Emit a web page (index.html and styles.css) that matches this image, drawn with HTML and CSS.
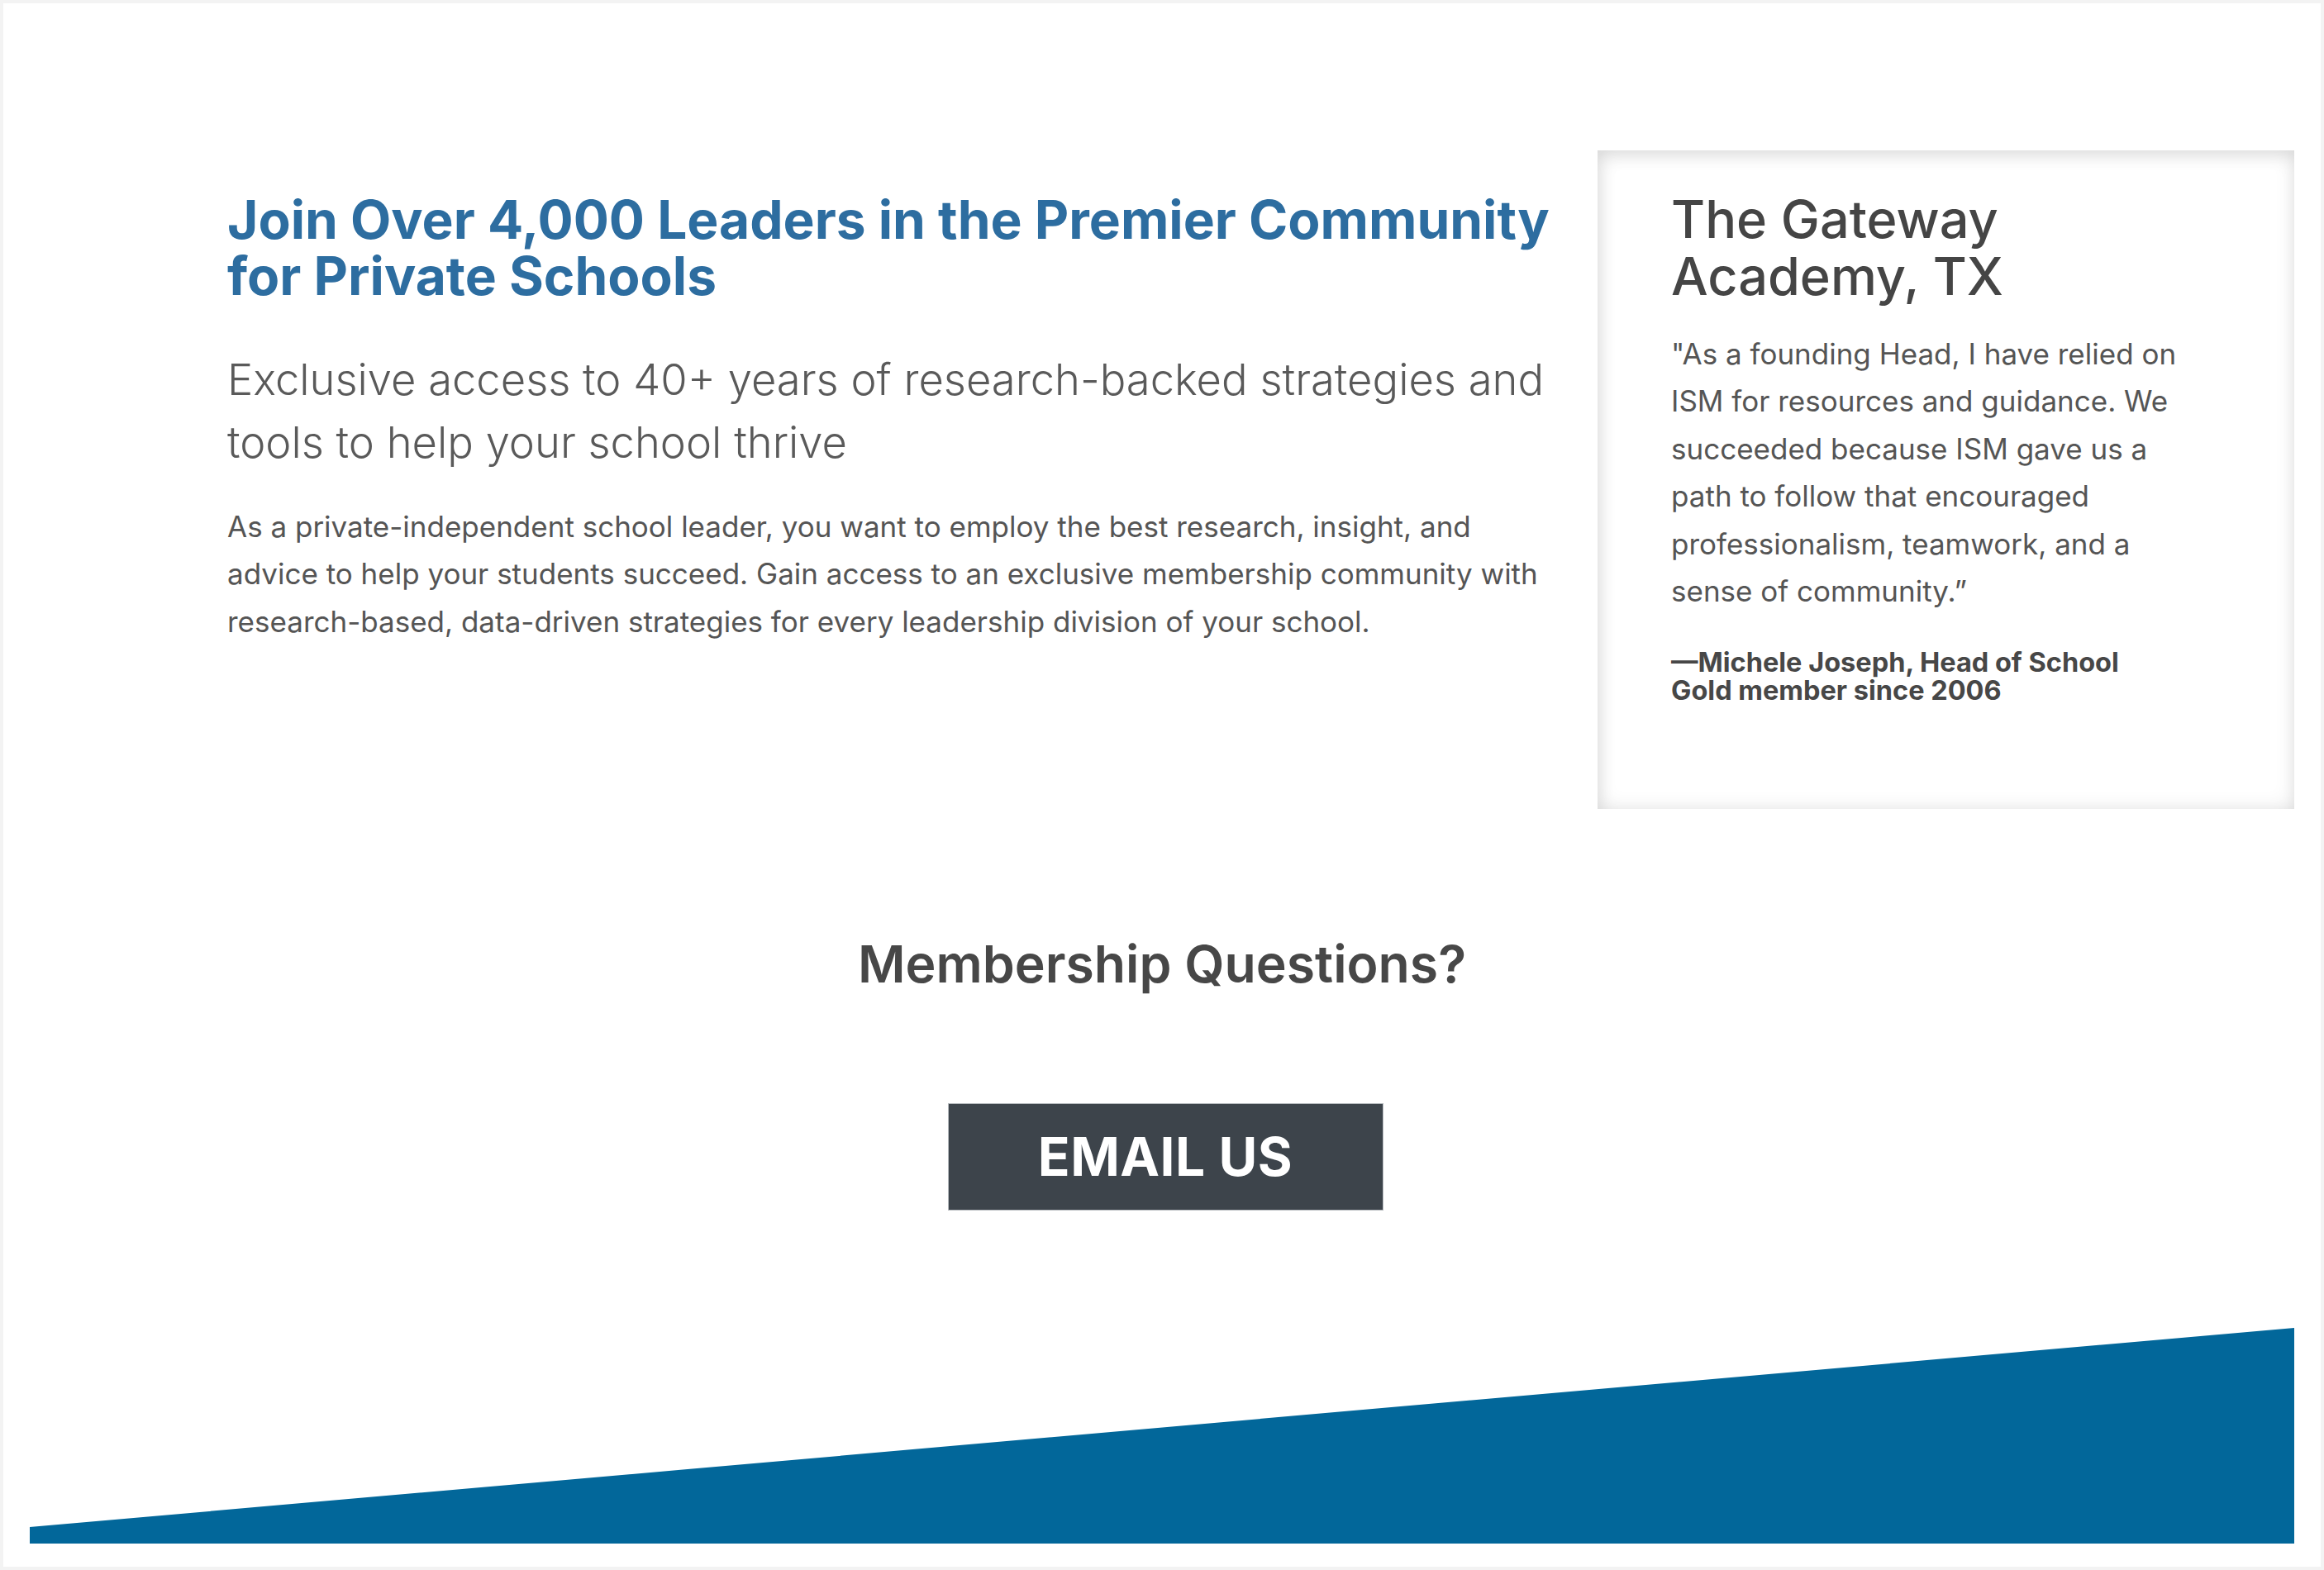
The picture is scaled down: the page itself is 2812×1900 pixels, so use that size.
FILE: index.html
```html
<!DOCTYPE html>
<html lang="en">
<head>
<meta charset="utf-8">
<title>Membership</title>
<link rel="stylesheet" href="styles.css">
</head>
<body>
<div class="page">
  <section class="intro">
    <div class="intro-text">
      <h1 class="intro-title">Join Over 4,000 Leaders in the Premier Community for Private Schools</h1>
      <p class="intro-lead">Exclusive access to 40+ years of research-backed strategies and tools to help your school thrive</p>
      <p class="intro-body">As a private-independent school leader, you want to employ the best research, insight, and advice to help your students succeed. Gain access to an exclusive membership community with research-based, data-driven strategies for every leadership division of your school.</p>
    </div>
    <aside class="testimonial">
      <h2 class="testimonial-school">The Gateway Academy, TX</h2>
      <p class="testimonial-quote">"As a founding Head, I have relied on ISM for resources and guidance. We succeeded because ISM gave us a path to follow that encouraged professionalism, teamwork, and a sense of community.”</p>
      <p class="testimonial-author">—Michele Joseph, Head of School<br>Gold member since 2006</p>
    </aside>
  </section>
  <section class="questions">
    <h2 class="questions-title">Membership Questions?</h2>
    <a class="email-button" href="#">EMAIL US</a>
  </section>
  <div class="wedge"></div>
</div>
</body>
</html>
```
FILE: styles.css
```css
html, body {
  margin: 0;
  padding: 0;
}
body {
  background: #f3f3f3;
  font-family: Inter, "Open Sans", sans-serif;
  color: #555;
}
.page {
  margin: 4px;
  height: 1892px;
  box-sizing: border-box;
  background: #fff;
  padding: 178px 32px 28px;
  display: flex;
  flex-direction: column;
}
.intro {
  display: flex;
  align-items: flex-start;
}
.intro-text {
  width: 1606px;
  margin-left: 239px;
  padding-top: 50px;
}
.intro-title {
  margin: 0;
  font-size: 64px;
  line-height: 68px;
  font-weight: 700;
  color: #2d6da0;
}
.intro-lead {
  margin: 53px 0 0;
  font-size: 52.5px;
  line-height: 76px;
  font-weight: 300;
  color: #5a5a5a;
}
.intro-body {
  margin: 36px 0 0;
  font-size: 35px;
  line-height: 57.4px;
  font-weight: 400;
  color: #555;
}
.testimonial {
  margin-left: auto;
  width: 843px;
  height: 797px;
  box-sizing: border-box;
  padding: 49px 134px 0 89px;
  background: #fff;
  box-shadow: inset 0 0 24px rgba(0, 0, 0, 0.10), inset 3px 8px 20px rgba(0, 0, 0, 0.08);
}
.testimonial-school {
  margin: 0;
  font-size: 63px;
  line-height: 69px;
  font-weight: 500;
  color: #454545;
}
.testimonial-quote {
  margin: 31px 0 0;
  font-size: 35px;
  line-height: 57.4px;
  color: #555;
}
.testimonial-author {
  margin: 41px 0 0;
  font-size: 32.5px;
  line-height: 34px;
  font-weight: 700;
  color: #474747;
}
.questions {
  display: flex;
  flex-direction: column;
  align-items: center;
  padding-top: 151px;
}
.questions-title {
  margin: 0;
  font-size: 62.5px;
  line-height: 73px;
  font-weight: 600;
  color: #474747;
}
.email-button {
  margin-top: 132px;
  margin-left: 8px;
  width: 527px;
  height: 130px;
  box-sizing: border-box;
  border: 1px solid #b9bdc1;
  background: #3d444b;
  color: #fff;
  text-decoration: none;
  font-size: 64px;
  line-height: 128px;
  font-weight: 700;
  letter-spacing: 0.5px;
  text-align: center;
}
.wedge {
  margin-top: auto;
  height: 261px;
  background: #02679a;
  clip-path: polygon(0 241px, 100% 0, 100% 100%, 0 100%);
}
```
